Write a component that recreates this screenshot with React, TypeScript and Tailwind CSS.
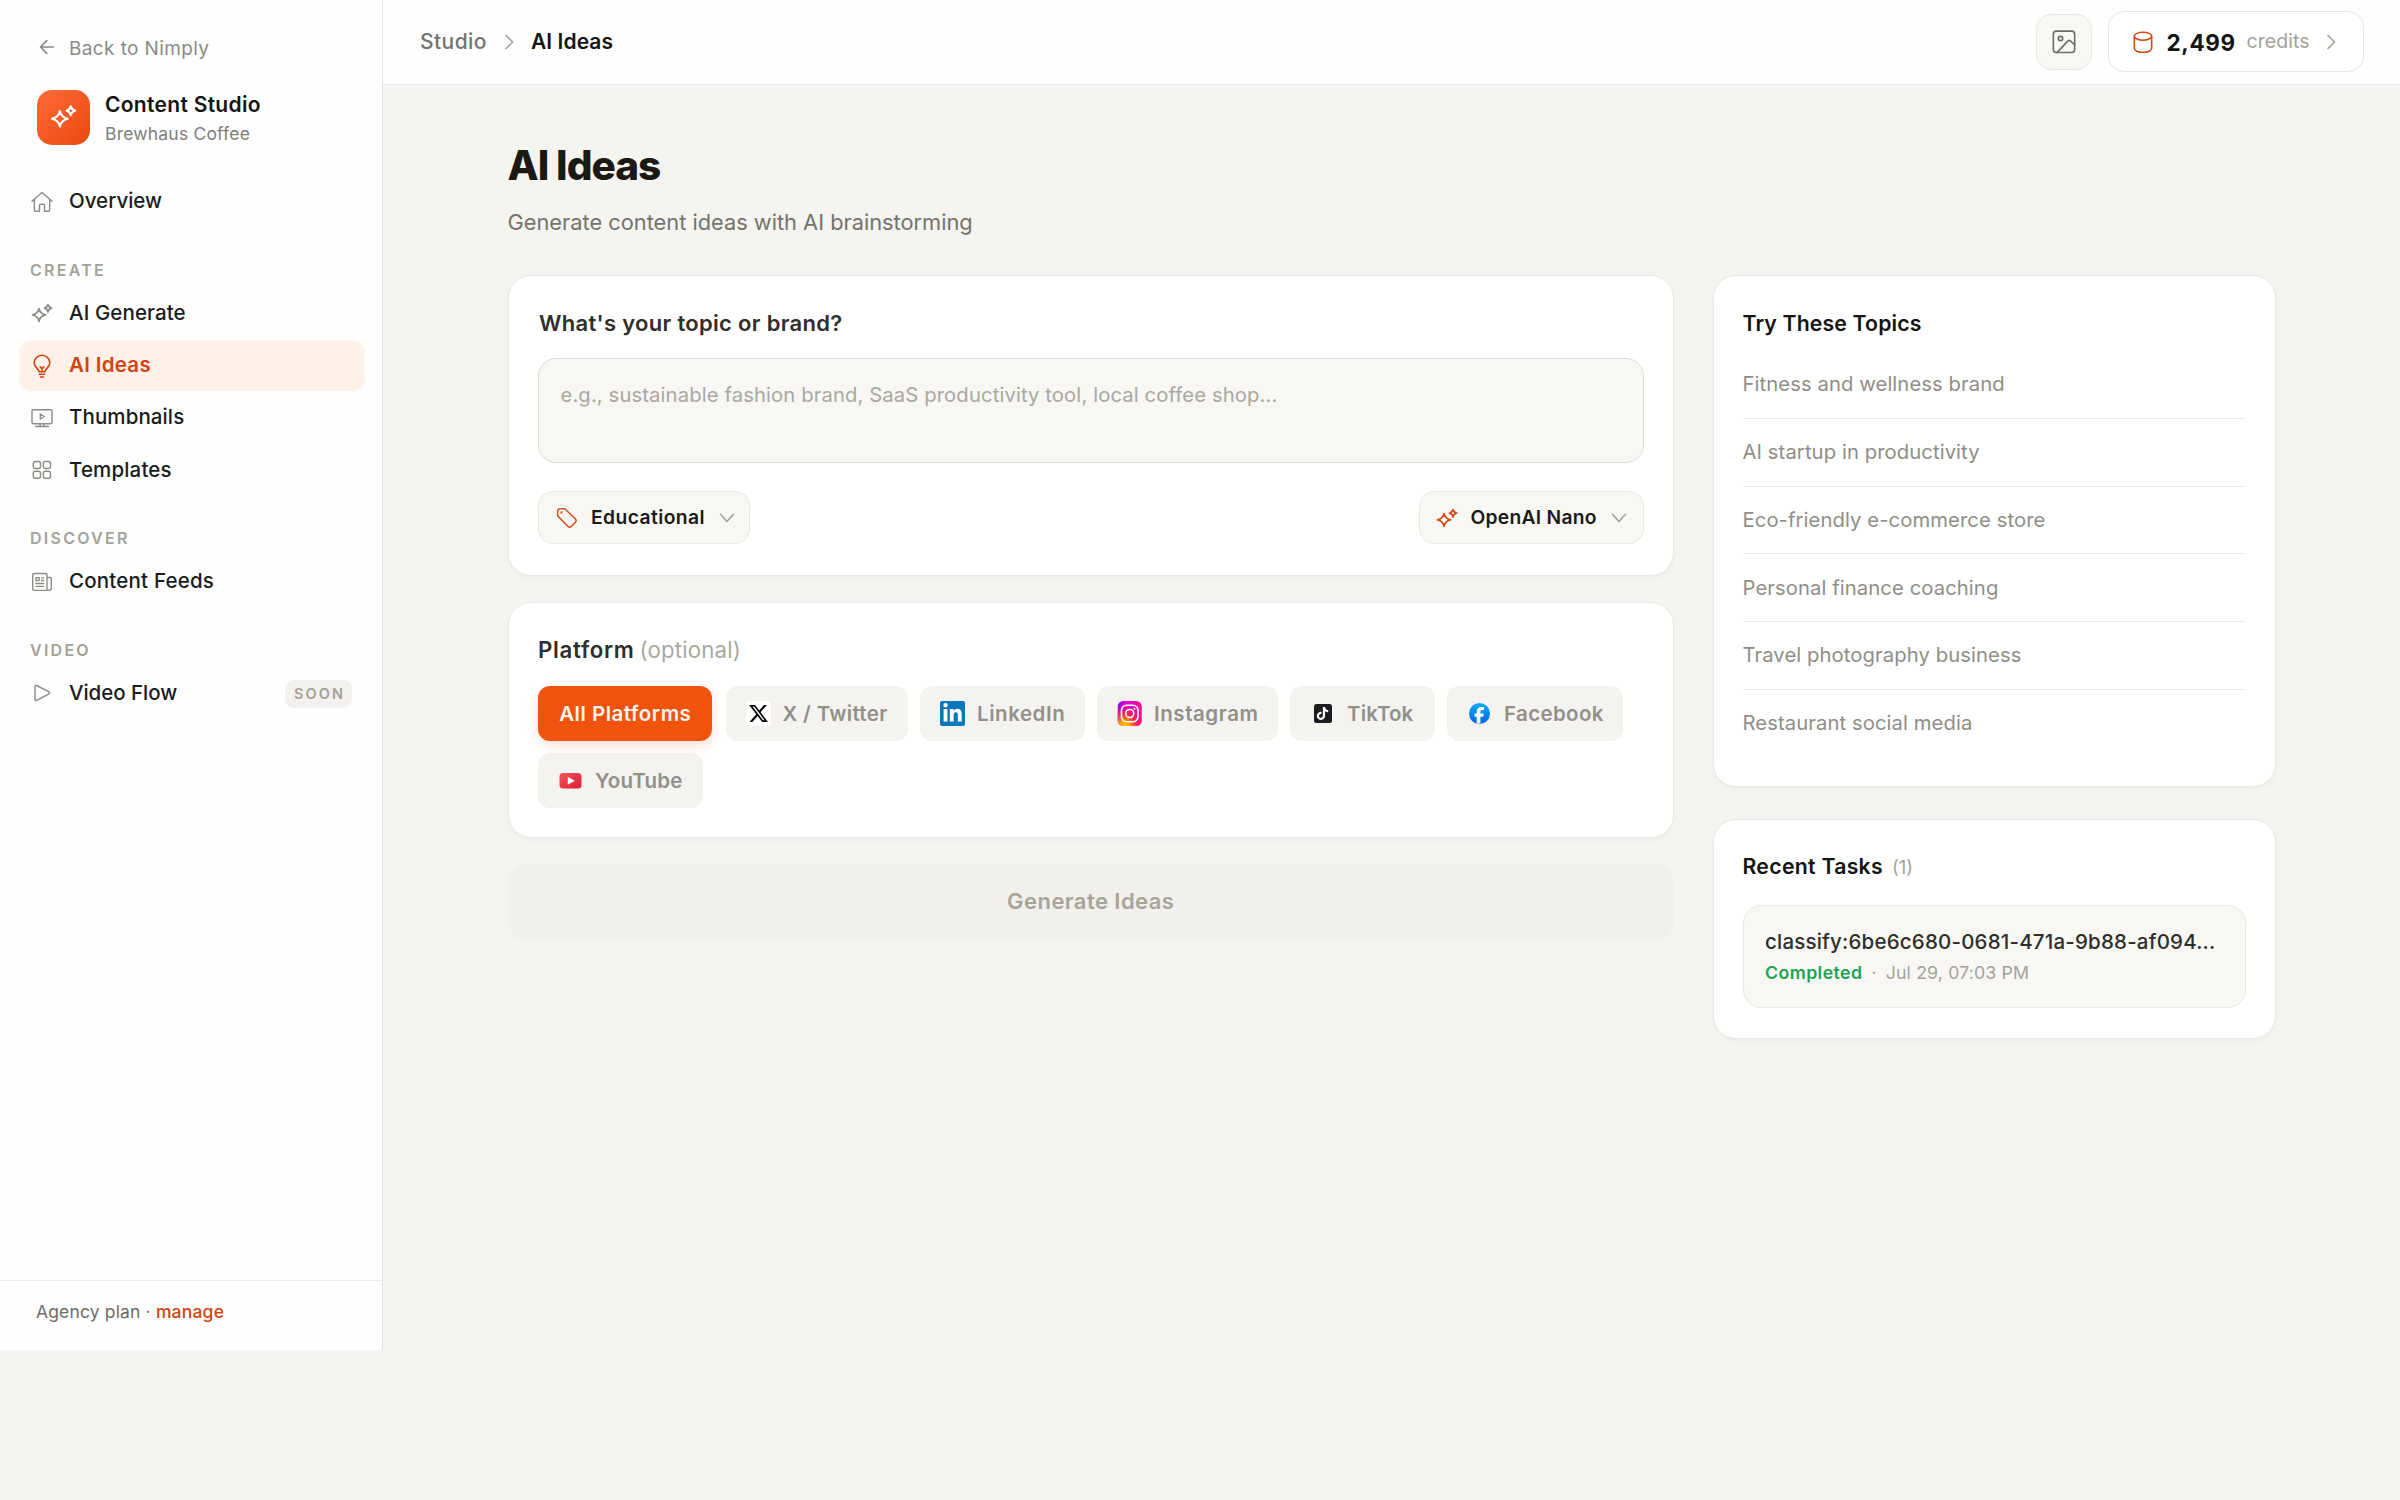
import React from "react";
import { FaXTwitter, FaLinkedinIn, FaTiktok, FaFacebookF } from "react-icons/fa6";

type IconProps = { className?: string };

/* ---------- icons ---------- */

function Line({ box, className, w = 4.6, children }: { box: string; className?: string; w?: number; children: React.ReactNode }) {
  return (
    <svg viewBox={box} className={className} fill="none" stroke="currentColor" strokeWidth={w} strokeLinecap="round" strokeLinejoin="round">
      {children}
    </svg>
  );
}

const ArrowLeft = ({ className }: IconProps) => (
  <Line box="0 0 48 48" className={className} w={5}>
    <path d="M43 24H5M23 5 4.500 24 23 43" />
  </Line>
);

const Sparkles = ({ className, w = 5 }: IconProps & { w?: number }) => (
  <Line box="0 0 72 72" className={className} w={w}>
    <path d="M27 22.500Q30 38 46.500 41.500Q30 45 27 61Q24 45 7.500 41.500Q24 38 27 22.500Z" />
    <path d="M54 10.500Q56 19.500 65 21.500Q56 23.500 54 33Q52 23.500 43.500 21.500Q52 19.500 54 10.500Z" />
  </Line>
);

const Home = ({ className }: IconProps) => (
  <Line box="90 570 72 72" className={className} w={4.3}>
    <path d="M96 604 126 577.500 156 604M103 598V629Q103 633.500 107.500 633.500H118.500V616Q118.500 613 121.500 613H130.500Q133.500 613 133.500 616V633.500H144.500Q149 633.500 149 629V598" />
  </Line>
);

const Bulb = ({ className }: IconProps) => (
  <Line box="90 1060 72 72" className={className} w={4.6}>
    <path d="M117 1113C117 1103 102.500 1101 102.500 1087A23.500 23.500 0 0 1 149.500 1087C149.500 1101 135 1103 135 1113ZM126 1112V1104L120.500 1098.500M126 1104 131.500 1098.500M118 1121H134M121.500 1129H130.500" />
  </Line>
);

const Screen = ({ className }: IconProps) => (
  <Line box="90 20 72 72" className={className} w={4.3}>
    <rect x="96" y="31" width="60" height="42" rx="4" />
    <path d="M121 44 133 51.500 121 59ZM107 81.500H145M120.500 74V81M131.500 74V81" />
  </Line>
);

const Grid = ({ className }: IconProps) => (
  <Line box="90 175 72 72" className={className} w={4.3}>
    <rect x="100" y="185.500" width="21.500" height="21" rx="6" />
    <rect x="130" y="185.500" width="21.500" height="21" rx="6" />
    <rect x="100" y="215" width="21.500" height="21" rx="6" />
    <rect x="130" y="215" width="21.500" height="21" rx="6" />
  </Line>
);

const News = ({ className }: IconProps) => (
  <Line box="90 510 72 72" className={className} w={4.1}>
    <path d="M141 571H103Q98 571 98 566V525Q98 520.500 103 520.500H136Q141 520.500 141 525V565Q141 571 147.500 571T154 565V536Q154 532.500 150 532.500H142" />
    <path d="M108 533H117.500V541.500H108ZM124.500 533.500H131M124.500 541.500H131M107.500 550.500H131M107.500 559H131" />
  </Line>
);

const Play = ({ className }: IconProps) => (
  <Line box="90 846 72 72" className={className} w={4.3}>
    <path d="M105 862Q105 857 110 859.500L147 878.500Q151 881.500 147 884.500L110 904Q105 906 105 901Z" />
  </Line>
);

const Photo = ({ className }: IconProps) => (
  <Line box="215 90 72 72" className={className} w={4.8}>
    <rect x="219" y="93.500" width="64" height="64" rx="9" />
    <circle cx="240.500" cy="115.500" r="6.500" />
    <path d="M230.500 157 263 122.500Q266.500 119.500 270 122.500L283 134.500" />
  </Line>
);

const Coins = ({ className }: IconProps) => (
  <Line box="450 89 72 72" className={className} w={4.7}>
    <ellipse cx="486" cy="107.500" rx="26" ry="12" />
    <path d="M460 107.500V144C460 151 471.500 156 486 156S512 151 512 144V107.500" />
  </Line>
);

const Tag = ({ className }: IconProps) => (
  <Line box="0 0 72 72" className={className} w={5}>
    <path d="M5.500 14Q5.500 5.500 14 5.500H25Q29 5.500 31.500 8L63 38.500Q69 44.500 63 50.500L50.500 63Q44.500 69 38.500 63L8 31.500Q5.500 29 5.500 25Z" />
    <circle cx="18" cy="18" r="1.500" />
  </Line>
);

const ChevronRight = ({ className }: IconProps) => (
  <Line box="0 0 48 48" className={className} w={5}>
    <path d="M15 4.500 35 24 15 43.500" />
  </Line>
);

const ChevronDown = ({ className }: IconProps) => (
  <Line box="0 0 48 48" className={className} w={4.8}>
    <path d="M4.500 13 24 34.500 43.500 13" />
  </Line>
);

/* ---------- platform logos ---------- */

const XLogo = () => (
  <span className="flex size-[25px] items-center justify-center rounded-[2px] bg-white text-[21px] text-black">
    <FaXTwitter />
  </span>
);

const LinkedInLogo = () => (
  <span className="flex size-[25px] items-center justify-center rounded-[2px] bg-[#0a78b8] text-[21px] text-white">
    <FaLinkedinIn />
  </span>
);

const InstagramLogo = () => (
  <svg viewBox="0 0 50 50" className="size-[25px]" fill="none">
    <defs>
      <linearGradient id="igBase" x1="0" y1="0" x2="1" y2="0.3">
        <stop offset="0" stopColor="#6f0cf0" />
        <stop offset="0.35" stopColor="#e800c4" />
        <stop offset="1" stopColor="#fb0f8c" />
      </linearGradient>
      <radialGradient id="igGlow" cx="0.25" cy="1.05" r="0.85">
        <stop offset="0" stopColor="#ffd600" />
        <stop offset="0.3" stopColor="#ff9a00" />
        <stop offset="0.65" stopColor="#ff2a4d" stopOpacity="0.85" />
        <stop offset="1" stopColor="#ff0f7b" stopOpacity="0" />
      </radialGradient>
    </defs>
    <rect x="1.500" y="0" width="48" height="50" rx="11" fill="url(#igBase)" />
    <rect x="1.500" y="0" width="48" height="50" rx="11" fill="url(#igGlow)" />
    <rect x="9" y="8.500" width="33" height="33" rx="10" stroke="#fff" strokeWidth="3.200" />
    <circle cx="25.500" cy="25" r="8" stroke="#fff" strokeWidth="3.200" />
    <circle cx="35" cy="15.500" r="2.200" fill="#fff" />
  </svg>
);

const TikTokLogo = () => (
  <span className="flex size-[25px] items-center justify-center">
    <span className="flex h-[19px] w-[18px] items-center justify-center rounded-[2.5px] bg-[#1c1b1f] text-[13px] text-white">
      <FaTiktok />
    </span>
  </span>
);

const FacebookLogo = () => (
  <span className="flex size-[25px] items-center justify-center">
    <span className="flex size-[20.5px] items-end justify-center overflow-hidden rounded-full bg-linear-to-b from-[#18acfe] to-[#0163e0] text-[16.5px] text-white">
      <FaFacebookF />
    </span>
  </span>
);

const YouTubeLogo = () => (
  <svg viewBox="0 0 50 50" className="size-[25px]">
    <defs>
      <linearGradient id="ytFill" x1="0" y1="0" x2="1" y2="1">
        <stop offset="0" stopColor="#f4525c" />
        <stop offset="1" stopColor="#dc1f35" />
      </linearGradient>
    </defs>
    <rect x="3" y="10" width="44" height="31" rx="7" fill="url(#ytFill)" />
    <path d="M19.500 17.500 33.500 25.500 19.500 33.500Z" fill="#fff" />
  </svg>
);

/* ---------- sidebar ---------- */

function NavItem({ icon, label, track, active, badge }: { icon: React.ReactNode; label: string; track: string; active?: boolean; badge?: string }) {
  return (
    <a
      className={
        "flex h-[51.3px] items-center gap-[15px] rounded-[13px] pl-[11.5px] pr-[13px] text-[20.5px] " +
        (active ? "bg-[#fff0e8] font-semibold text-[#cf4410]" : "font-medium text-[#1b1b19]")
      }
    >
      <span className={active ? "text-[#cf4410]" : "text-[#8d8c87]"}>{icon}</span>
      <span className={track}>{label}</span>
      {badge && (
        <span className="ml-auto flex h-[28px] w-[67px] translate-y-px items-center justify-center rounded-[9px] bg-[#f2f1ee] pb-px pl-[2px] text-[14.5px] font-semibold tracking-[2.1px] text-[#a5a298]">
          {badge}
        </span>
      )}
    </a>
  );
}

const NavLabel = ({ children }: { children: React.ReactNode }) => (
  <div className="mt-[24.3px] flex h-9 items-center pl-[11.5px] text-[16px] font-semibold tracking-[2.25px] text-[#a5a298]">{children}</div>
);

const ic = "block size-6";

function Sidebar() {
  return (
    <aside className="flex h-[1350px] w-[383px] shrink-0 flex-col border-r border-[#e4e3e0] bg-[#fefefe]">
      <a className="mt-[33px] flex h-[30px] items-center pl-[39px] text-[#8b8a86]">
        <ArrowLeft className="size-4 -translate-y-px" />
        <span className="ml-[14px] translate-y-px text-[19px] tracking-[0.38px]">Back to Nimply</span>
      </a>
      <div className="mt-[27px] flex h-[55px] items-center pl-[37px]">
        <div className="flex h-[55px] w-[53px] items-center justify-center rounded-[15px] bg-linear-to-br from-[#fd6a34] to-[#ec480b] text-white">
          <Sparkles className="size-[29px] -translate-y-px" w={5.2} />
        </div>
        <div className="ml-[15px] pt-[2px]">
          <div className="h-[29px] text-[21px] leading-[29px] font-semibold tracking-[0.3px] text-[#141413]">Content Studio</div>
          <div className="h-[29px] text-[17.5px] leading-[29px] tracking-[0.2px] text-[#7f7e7a]">Brewhaus Coffee</div>
        </div>
      </div>
      <nav className="mt-[31px] ml-[18.5px] flex w-[346.5px] flex-col">
        <NavItem icon={<Home className={ic} />} label="Overview" track="tracking-normal" />
        <NavLabel>CREATE</NavLabel>
        <div className="flex flex-col gap-px">
          <NavItem icon={<Sparkles className={ic} />} label="AI Generate" track="tracking-[0.1px]" />
          <NavItem icon={<Bulb className={ic} />} label="AI Ideas" track="tracking-[0.3px]" active />
          <NavItem icon={<Screen className={ic} />} label="Thumbnails" track="tracking-[0.1px]" />
          <NavItem icon={<Grid className={ic} />} label="Templates" track="tracking-[0.15px]" />
        </div>
        <NavLabel>DISCOVER</NavLabel>
        <NavItem icon={<News className={ic} />} label="Content Feeds" track="tracking-[0.2px]" />
        <NavLabel>VIDEO</NavLabel>
        <NavItem icon={<Play className={ic} />} label="Video Flow" track="tracking-[-0.04px]" badge="SOON" />
      </nav>
      <div className="mt-auto flex h-[70px] items-start border-t-[1.5px] border-[#ecebe8] pl-[36px] pt-[16px] text-[17.5px] leading-[29px]">
        <span className="whitespace-pre tracking-[0.15px] text-[#6d6c68]">Agency plan · </span>
        <span className="font-medium tracking-[0.2px] text-[#d1450f]">manage</span>
      </div>
    </aside>
  );
}

/* ---------- header ---------- */

function Header() {
  return (
    <header className="flex h-[84.5px] items-center border-b-[1.5px] border-[#e6e5e2] bg-[#fefefe] pl-[37px] pr-[36.500px]">
      <span className="w-[80px] text-[21px] font-medium tracking-[0.44px] text-[#74736e]">Studio</span>
      <ChevronRight className="ml-[1px] size-4 text-[#a5a39c]" />
      <span className="ml-[14px] text-[21px] font-semibold tracking-[0.07px] text-[#141413]">AI Ideas</span>
      <button className="ml-auto flex size-[56.5px] items-center justify-center rounded-[15px] border-[1.5px] border-[#e8e7e3] bg-[#f8f7f4] text-[#6d6c66]">
        <Photo className="size-6" />
      </button>
      <button className="ml-[15.5px] flex h-[61px] w-[256px] items-center rounded-[16px] border-[1.5px] border-[#e6e5e2] bg-white pl-[22px] text-left">
        <Coins className="size-6 text-[#d84c17]" />
        <span className="ml-[12px] w-[80px] translate-y-px text-[22.5px] font-bold tracking-[0.65px] text-[#141413]">2,499</span>
        <span className="w-[76.500px] text-[19.5px] tracking-[0.05px] text-[#a3a29b]">credits</span>
        <ChevronRight className="size-4 text-[#a3a29b]" />
      </button>
    </header>
  );
}

/* ---------- main ---------- */

const card = "rounded-[23px] border-[1.5px] border-[#eae9e5] bg-white shadow-[0_2px_4px_rgba(30,25,15,0.035)]";

function Select({ icon, label, cls, track }: { icon: React.ReactNode; label: string; cls: string; track: string }) {
  return (
    <button className={"flex h-[53px] items-center rounded-[15px] border-[1.5px] border-[#e9e8e4] bg-[#f8f7f4] " + cls}>
      {icon}
      <span className={"text-[19.25px] font-semibold text-[#1a1a18] " + track}>{label}</span>
      <ChevronDown className="ml-auto size-4 text-[#a3a29b]" />
    </button>
  );
}

const platforms: { name: string; logo: React.ReactNode; cls: string }[] = [
  { name: "X / Twitter", logo: <XLogo />, cls: "w-[182.5px] tracking-[0.32px]" },
  { name: "LinkedIn", logo: <LinkedInLogo />, cls: "w-[165px] tracking-[0.55px]" },
  { name: "Instagram", logo: <InstagramLogo />, cls: "w-[181px] tracking-[0.55px]" },
  { name: "TikTok", logo: <TikTokLogo />, cls: "w-[145px] tracking-[0.16px]" },
  { name: "Facebook", logo: <FacebookLogo />, cls: "w-[176px] tracking-[0.36px]" },
  { name: "YouTube", logo: <YouTubeLogo />, cls: "w-[165px] tracking-[0.2px]" },
];

const topics = [
  "Fitness and wellness brand",
  "AI startup in productivity",
  "Eco-friendly e-commerce store",
  "Personal finance coaching",
  "Travel photography business",
  "Restaurant social media",
];

export default function App() {
  return (
    <div className="flex h-[1500px] w-[2400px] items-start overflow-hidden bg-[#f5f4f0] font-['Inter',sans-serif]">
      <Sidebar />
      <div className="flex min-w-0 flex-1 flex-col">
        <Header />
        <main className="pl-[124.5px] pt-[51px]">
          <h1 className="h-[59px] text-[40.5px] leading-[59px] font-extrabold tracking-[-1px] text-[#1a1914]">AI Ideas</h1>
          <p className="mt-[12px] h-[30px] text-[21.8px] leading-[30px] text-[#74736d]">Generate content ideas with AI brainstorming</p>

          <div className="mt-[38.5px] flex items-start gap-[38.5px]">
            <div className="flex w-[1166.5px] flex-col">
              <section className={"h-[300.5px] px-[29.5px] pt-[32px] " + card}>
                <h2 className="h-[30px] pl-px text-[22px] leading-[30px] font-semibold tracking-[0.31px] text-[#2f2e2b]">What's your topic or brand?</h2>
                <div className="mt-[20px] h-[105px] rounded-[18px] border-[1.5px] border-[#dcdbd7] bg-[#f8f7f4] pt-[21px] pl-[21.5px] text-[20.25px] leading-[30px] tracking-[0.11px] text-[#a9a8a1]">
                  e.g., sustainable fashion brand, SaaS productivity tool, local coffee shop...
                </div>
                <div className="mt-[28px] flex items-center justify-between">
                  <Select icon={<Tag className="size-[22px] text-[#cf5420]" />} label="Educational" cls="w-[212px] pl-[17px] pr-[14px]" track="ml-[13px] tracking-[0.42px]" />
                  <Select icon={<Sparkles className="size-[24px] text-[#d84c17]" />} label="OpenAI Nano" cls="w-[225px] pl-[15px] pr-[16px]" track="ml-[12px] tracking-[0.27px]" />
                </div>
              </section>

              <section className={"mt-[26.5px] h-[235.5px] px-[29.5px] pt-[32px] " + card}>
                <h2 className="h-[30px] text-[22.25px] leading-[30px] text-[#a9a8a1]">
                  <span className="font-semibold tracking-[0.7px] text-[#2f2e2b]">Platform</span>
                  <span className="ml-[5px] tracking-[0.15px]">(optional)</span>
                </h2>
                <div className="mt-[21px] flex flex-wrap gap-x-[12px] gap-y-[12px] text-[20.5px] font-semibold text-[#92908a]">
                  <button className="mr-[2px] flex h-[55px] w-[173.500px] items-center justify-center rounded-[12px] bg-[#f1530e] pt-px pl-px tracking-[0.49px] text-[#fff3ea] shadow-[0_4px_12px_rgba(240,80,14,0.2)]">
                    All Platforms
                  </button>
                  {platforms.map((p) => (
                    <button key={p.name} className={"flex h-[55px] items-center rounded-[12px] bg-[#f4f3f0] pl-[20px] whitespace-nowrap " + p.cls}>
                      {p.logo}
                      <span className="ml-[12px] pt-px">{p.name}</span>
                    </button>
                  ))}
                </div>
              </section>

              <button className="mt-[25.5px] flex h-[77.5px] items-center justify-center rounded-[20px] bg-[#f1f0ec] text-[22px] font-semibold tracking-[0.45px] text-[#a8a499]">
                Generate Ideas
              </button>
            </div>

            <div className="flex w-[563.5px] flex-col">
              <section className={"h-[512px] px-[29px] pt-[32px] " + card}>
                <h2 className="h-[30px] text-[21.25px] leading-[30px] font-semibold tracking-[0.14px] text-[#141413]">Try These Topics</h2>
                <ul className="mt-[13px] divide-y-[1.5px] divide-[#ecebe8]">
                  {topics.map((t) => (
                    <li key={t} className="flex h-[67.8px] items-center text-[20.25px] tracking-[0.08px] text-[#8f8e88] last:h-[66px]">
                      {t}
                    </li>
                  ))}
                </ul>
              </section>

              <section className={"mt-[31.5px] h-[220px] px-[29px] pt-[32px] " + card}>
                <h2 className="flex h-[31px] items-center">
                  <span className="text-[21.25px] font-semibold tracking-[0.28px] text-[#141413]">Recent Tasks</span>
                  <span className="ml-[9px] pt-[2px] text-[18.5px] text-[#a3a29b]">(1)</span>
                </h2>
                <div className="mt-[22px] h-[103px] rounded-[18px] border-[1.5px] border-[#e9e8e4] bg-[#f8f7f4] pt-[20px] pl-[21.5px]">
                  <div className="h-[31px] text-[20.5px] leading-[31px] font-medium tracking-[0.2px] text-[#2f2e2b]">classify:6be6c680-0681-471a-9b88-af094...</div>
                  <div className="mt-[2px] flex h-[30px] items-center text-[17.75px] text-[#a3a29b]">
                    <span className="font-semibold tracking-[0.42px] text-[#1da351]">Completed</span>
                    <span className="mx-[9px]">·</span>
                    <span className="tracking-[0.14px]">Jul 29, 07:03 PM</span>
                  </div>
                </div>
              </section>
            </div>
          </div>
        </main>
      </div>
    </div>
  );
}
